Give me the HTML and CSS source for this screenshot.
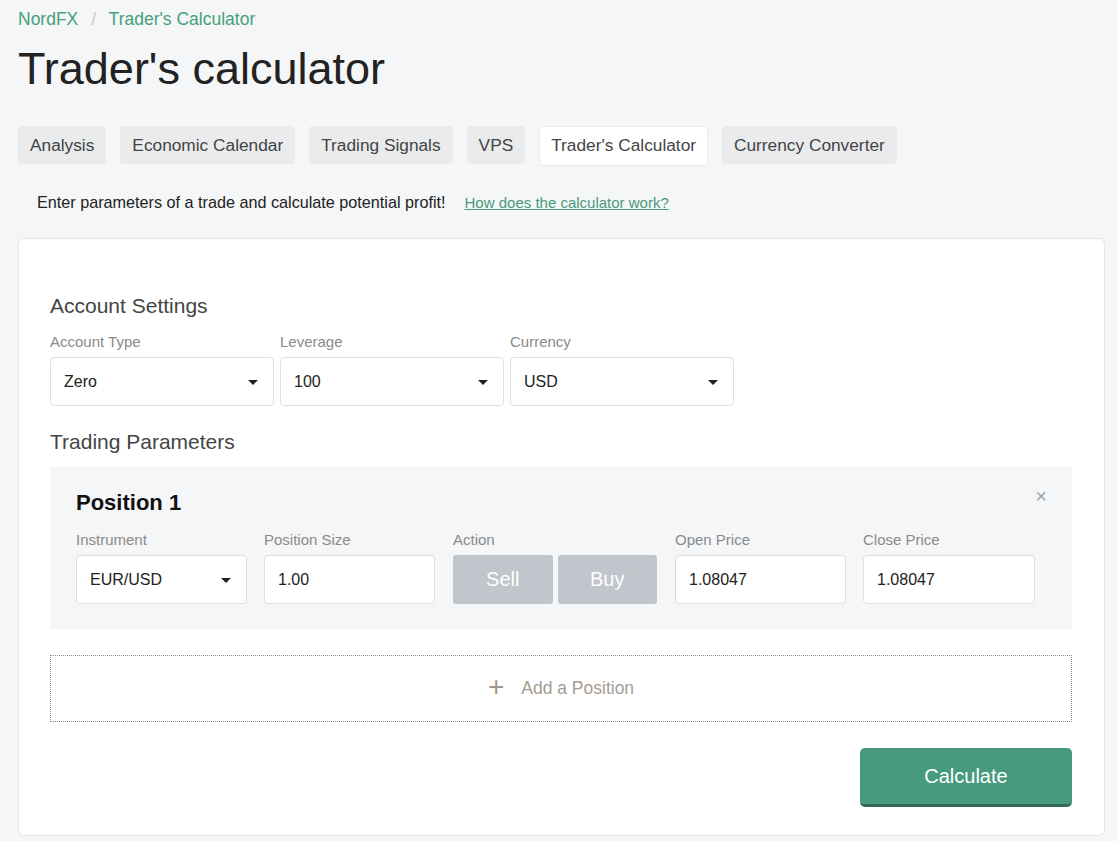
FILE: index.html
```html
<!DOCTYPE html>
<html lang="en">
<head>
<meta charset="UTF-8">
<meta name="viewport" content="width=device-width, initial-scale=1.0">
<title>Trader's calculator</title>
<link rel="stylesheet" href="styles.css">
</head>
<body>

<div class="breadcrumbs">
    <a href="#">NordFX</a>
    <span class="sep">/</span>
    <a href="#">Trader's Calculator</a>
</div>

<h1 class="page-title">Trader's calculator</h1>

<div class="tabs">
    <a class="tab" href="#">Analysis</a>
    <a class="tab" href="#">Economic Calendar</a>
    <a class="tab" href="#">Trading Signals</a>
    <a class="tab" href="#">VPS</a>
    <a class="tab active" href="#">Trader's Calculator</a>
    <a class="tab" href="#">Currency Converter</a>
</div>

<div class="intro">
    <span>Enter parameters of a trade and calculate potential profit!</span>
    <a href="#" class="help-link">How does the calculator work?</a>
</div>

<div class="calc-card">
    <h2 class="section-title">Account Settings</h2>
    <div class="field-row">
        <div class="field">
            <label>Account Type</label>
            <div class="select">Zero</div>
        </div>
        <div class="field">
            <label>Leverage</label>
            <div class="select">100</div>
        </div>
        <div class="field">
            <label>Currency</label>
            <div class="select">USD</div>
        </div>
    </div>

    <h2 class="section-title params-title">Trading Parameters</h2>
    <div class="position">
        <span class="close-btn">×</span>
        <div class="position-title">Position 1</div>
        <div class="position-row">
            <div class="field w-instrument">
                <label>Instrument</label>
                <div class="select">EUR/USD</div>
            </div>
            <div class="field w-size">
                <label>Position Size</label>
                <div class="text-input">1.00</div>
            </div>
            <div class="field w-action">
                <label>Action</label>
                <div class="action-btns">
                    <button class="action-btn">Sell</button>
                    <button class="action-btn">Buy</button>
                </div>
            </div>
            <div class="field w-open">
                <label>Open Price</label>
                <div class="text-input">1.08047</div>
            </div>
            <div class="field w-close">
                <label>Close Price</label>
                <div class="text-input">1.08047</div>
            </div>
        </div>
    </div>

    <div class="add-position">
        <span class="plus">+</span>
        <span>Add a Position</span>
    </div>

    <div class="calc-footer">
        <button class="calculate-btn">Calculate</button>
    </div>
</div>

</body>
</html>
```

FILE: styles.css
```css
body {
    font-family: "Liberation Sans", Arial, sans-serif;
    margin: 0;
    padding: 0 12px 0 18px;
    background-color: #f4f6f8;
    color: #222;
}

a {
    text-decoration: none;
}

.breadcrumbs {
    margin-top: 9px;
    font-size: 17.5px;
    line-height: 21px;
}

.breadcrumbs a {
    color: #46a07b;
}

.breadcrumbs .sep {
    color: #c4c8cc;
    margin: 0 8px;
}

.page-title {
    margin: 13px 0 0 0;
    font-size: 45px;
    line-height: 52px;
    font-weight: normal;
    color: #222;
}

.tabs {
    display: flex;
    gap: 14px;
    margin-top: 31px;
}

.tab {
    display: block;
    height: 38px;
    line-height: 38px;
    padding: 0 12px;
    font-size: 17.3px;
    color: #444;
    background: #e9ebed;
    border-radius: 4px;
}

.tab.active {
    background: #fff;
    border: 1px solid #e6eaee;
    line-height: 36px;
    padding: 0 11px;
}

.intro {
    margin-top: 26px;
    padding-left: 19px;
    font-size: 16.2px;
    line-height: 20px;
    color: #222;
    display: flex;
    align-items: baseline;
    gap: 19px;
}

.help-link {
    font-size: 15px;
    color: #4a9a7c;
    text-decoration: underline;
}

.calc-card {
    margin-top: 25px;
    background: #fff;
    border: 1px solid #e2e6ea;
    border-radius: 6px;
    padding: 55px 32px 28px 31px;
}

.section-title {
    margin: 0;
    font-size: 21px;
    line-height: 24px;
    font-weight: normal;
    color: #444;
}

.params-title {
    margin-top: 24px;
}

.field-row {
    display: flex;
    gap: 6px;
    margin-top: 16px;
}

.field {
    display: flex;
    flex-direction: column;
    width: 224px;
}

.field label {
    font-size: 15px;
    line-height: 16px;
    color: #8a8a8a;
    margin-bottom: 7px;
}

.select,
.text-input {
    position: relative;
    height: 49px;
    box-sizing: border-box;
    border: 1px solid #dcdfe3;
    border-radius: 4px;
    background: #fff;
    padding: 0 13px;
    font-size: 16px;
    line-height: 47px;
    color: #222;
}

.select::after {
    content: "";
    position: absolute;
    right: 15px;
    top: 22px;
    border-left: 5px solid transparent;
    border-right: 5px solid transparent;
    border-top: 5px solid #222;
}

.position {
    position: relative;
    margin-top: 13px;
    background: #f4f6f8;
    padding: 23px 26px 25px 26px;
}

.close-btn {
    position: absolute;
    top: 18px;
    right: 25px;
    font-size: 20px;
    color: #a0a4a8;
}

.position-title {
    font-size: 22px;
    line-height: 26px;
    font-weight: bold;
    color: #111;
}

.position-row {
    display: flex;
    margin-top: 16px;
}

.w-instrument { width: 171px; margin-right: 17px; }
.w-size { width: 171px; margin-right: 18px; }
.w-action { width: 204px; margin-right: 18px; }
.w-open { width: 171px; margin-right: 17px; }
.w-close { width: 172px; }

.action-btns {
    display: flex;
    gap: 5px;
}

.action-btn {
    flex: 1;
    height: 49px;
    border: none;
    border-radius: 3px;
    background: #c1c5cc;
    color: #fff;
    font-family: inherit;
    font-size: 20px;
}

.add-position {
    margin-top: 26px;
    height: 67px;
    box-sizing: border-box;
    border: 1px dotted #8c8c8c;
    display: flex;
    align-items: center;
    justify-content: center;
    gap: 17px;
    font-size: 17.5px;
    color: #a49c92;
}

.add-position .plus {
    font-size: 28px;
    color: #9e968c;
    margin-top: -4px;
}

.calc-footer {
    display: flex;
    justify-content: flex-end;
    margin-top: 26px;
}

.calculate-btn {
    width: 212px;
    height: 59px;
    border: none;
    border-bottom: 3px solid #2f6b56;
    border-radius: 5px;
    background: #479a7e;
    color: #fff;
    font-family: inherit;
    font-size: 20px;
}
```
